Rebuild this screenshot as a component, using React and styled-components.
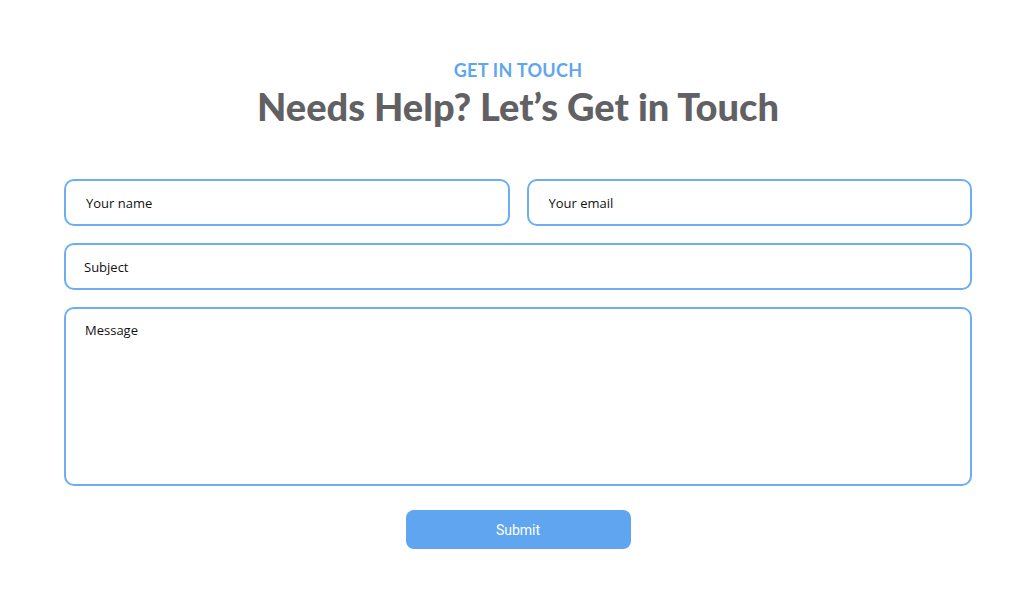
import React from "react";
import styled, { createGlobalStyle } from "styled-components";

const GlobalStyle = createGlobalStyle`
  body {
    margin: 0;
    background: #ffffff;
    font-family: "Open Sans", sans-serif;
  }
`;

const Section = styled.section`
  width: 908px;
  margin: 0 auto;
  padding-top: 59px;
  display: flex;
  flex-direction: column;
  align-items: center;
`;

const Eyebrow = styled.p`
  margin: 0;
  font-family: "Lato", sans-serif;
  font-weight: 700;
  font-size: 18px;
  letter-spacing: 0.3px;
  color: #5fa6f0;
`;

const Title = styled.h1`
  margin: 2px 0 0;
  font-family: "Lato", sans-serif;
  font-weight: 900;
  font-size: 38px;
  line-height: 46px;
  color: #616164;
`;

const Form = styled.form`
  margin-top: 50px;
  width: 100%;
  display: flex;
  flex-direction: column;
  gap: 17px;
`;

const Row = styled.div`
  display: grid;
  grid-template-columns: 1fr 1fr;
  gap: 17px;
`;

const Field = styled.input`
  box-sizing: border-box;
  width: 100%;
  height: 47px;
  padding: 0 ${(p) => p.$pad || 20}px;
  border: 2px solid #6caef2;
  border-radius: 10px;
  font-family: "Open Sans", sans-serif;
  font-size: 13px;
  font-weight: 500;
  color: #000;
  outline: none;
  &::placeholder {
    color: #111;
  }
`;

const Message = styled.textarea`
  box-sizing: border-box;
  width: 100%;
  height: 179px;
  padding: 12px 19px;
  border: 2px solid #6caef2;
  border-radius: 10px;
  font-family: "Open Sans", sans-serif;
  font-size: 13px;
  font-weight: 500;
  resize: none;
  outline: none;
  &::placeholder {
    color: #111;
  }
`;

const Submit = styled.button`
  align-self: center;
  margin-top: 7px;
  width: 225px;
  height: 39px;
  border: none;
  border-radius: 8px;
  background: #5fa5f0;
  color: #fff;
  font-family: Roboto, sans-serif;
  font-size: 14px;
  cursor: pointer;
`;

export default function App() {
  return (
    <>
      <GlobalStyle />
      <Section>
        <Eyebrow>GET IN TOUCH</Eyebrow>
        <Title>Needs Help? Let’s Get in Touch</Title>
        <Form onSubmit={(e) => e.preventDefault()}>
          <Row>
            <Field placeholder="Your name" />
            <Field placeholder="Your email" />
          </Row>
          <Field placeholder="Subject" $pad={18} />
          <Message placeholder="Message" />
          <Submit type="submit">Submit</Submit>
        </Form>
      </Section>
    </>
  );
}
